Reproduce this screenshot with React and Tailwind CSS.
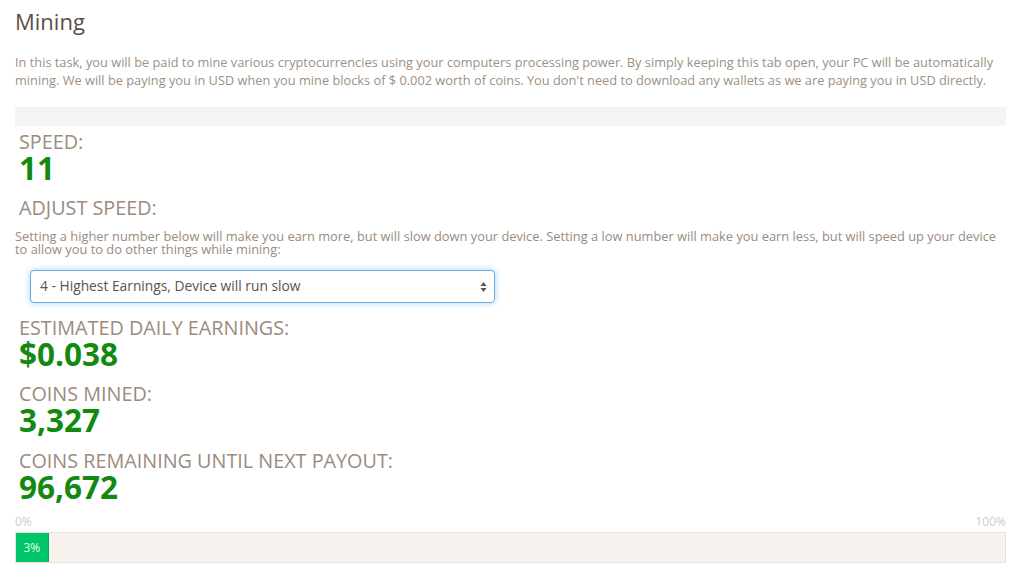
import React from 'react';

const font = { fontFamily: '"Open Sans", "Liberation Sans", sans-serif' };

const Stat = ({ label, value, className = '' }) => (
  <div className={`pl-[4px] ${className}`}>
    <div className="text-[19.8px] leading-[23px] text-[#9b8b7e] uppercase">{label}</div>
    <div className="text-[31.5px] leading-[29px] font-bold text-[#128a12]">{value}</div>
  </div>
);

export default function App() {
  const progress = 3;

  return (
    <div className="w-[1024px] h-[585px] bg-white overflow-hidden" style={font}>
      <div className="ml-[15px] w-[991px]">
        <h1 className="pt-[6px] text-[22px] leading-[30px] text-[#5a5048]">Mining</h1>

        <p className="mt-[17px] text-[12.8px] leading-[18px] text-[#a08f82]">
          In this task, you will be paid to mine various cryptocurrencies using your computers processing power. By simply keeping this tab open, your PC will be automatically mining. We will be paying you in USD when you mine blocks of $ 0.002 worth of coins. You don't need to download any wallets as we are paying you in USD directly.
        </p>

        {/* status bar */}
        <div className="mt-[18px] h-[19px] bg-[#f4f4f4]" />

        <Stat label="SPEED:" value="11" className="mt-[4px]" />

        <div className="pl-[4px] mt-[14px] text-[19.8px] leading-[24px] text-[#9b8b7e]">ADJUST SPEED:</div>

        <p className="mt-[10px] text-[12.85px] leading-[13px] text-[#9b8b7e]">
          Setting a higher number below will make you earn more, but will slow down your device. Setting a low number will make you earn less, but will speed up your device to allow you to do other things while mining:
        </p>

        <div className="mt-[14px] ml-[15px] w-[465px] h-[33px] flex items-center justify-between px-[9px] rounded-[4px] border border-[#66afe9] shadow-[0_0_6px_rgba(102,175,233,0.6)] bg-white">
          <span className="text-[13.8px] text-[#555]">4 - Highest Earnings, Device will run slow</span>
          <svg width="7" height="12" viewBox="0 0 7 12" className="mr-[-2px]">
            <path d="M3.5 1 L6.5 5 L0.5 5 Z" fill="#555" />
            <path d="M3.5 11 L6.5 7 L0.5 7 Z" fill="#555" />
          </svg>
        </div>

        <Stat label="ESTIMATED DAILY EARNINGS:" value="$0.038" className="mt-[13px]" />
        <Stat label="COINS MINED:" value="3,327" className="mt-[14px]" />
        <Stat label="COINS REMAINING UNTIL NEXT PAYOUT:" value="96,672" className="mt-[15px]" />

        {/* payout progress */}
        <div className="mt-[13px] flex justify-between text-[12px] leading-[16px] text-[#cccccc]">
          <span>0%</span>
          <span>100%</span>
        </div>
        <div className="mt-[2px] h-[31px] border border-[#f0e0d4] bg-[#f7f2ee] flex">
          <div
            className="h-full bg-[#00c46a] border-r border-[#0aa85a] flex items-center justify-center text-[12px] text-[#e8fff2]"
            style={{ width: `${progress * 1.1}%` }}
          >
            {progress}%
          </div>
        </div>
      </div>
    </div>
  );
}
